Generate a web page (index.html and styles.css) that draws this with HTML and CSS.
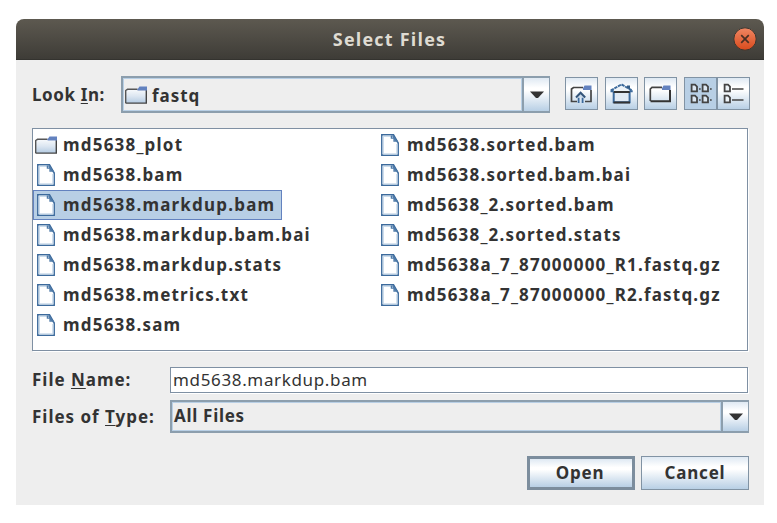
FILE: index.html
```html
<!DOCTYPE html>
<html lang="en">
<head>
<meta charset="utf-8">
<title>Select Files</title>
<link rel="stylesheet" href="styles.css">
</head>
<body>
<svg class="defs" width="0" height="0" aria-hidden="true">
  <defs>
    <linearGradient id="fold" x1="0" y1="0" x2="0" y2="1"><stop offset="0" stop-color="#f8fafc"/><stop offset=".5" stop-color="#dce6f1"/><stop offset="1" stop-color="#b4cbe2"/></linearGradient>
    <symbol id="folder" viewBox="0 0 22 18">
      <path d="M.7 17V4.5L2.5 3.3H12V5H21V17Z" fill="url(#fold)"/>
      <path d="M.7 17V4.5L2.5 3.3H12.5" fill="none" stroke="#555" stroke-width="1.4"/>
      <path d="M.5 17.1H21.3V4" fill="none" stroke="#444" stroke-width="1.4"/>
      <path d="M12.5 3.2L14.5.5H22V4.5H12.5Z" fill="#6382bf"/>
    </symbol>
    <symbol id="file" viewBox="0 0 18 22">
      <path d="M.8.8H12.5L17.2 9V21.2H.8Z" fill="#fff" stroke="#3c6a9c" stroke-width="1.5"/>
      <path d="M2.3 20V2.3H10M15.8 10V19.8H2.5" fill="none" stroke="#cbdcec" stroke-width="1.3"/>
      <path d="M10.4 1.5V4.2H13V7H16.5M11.5 1.5L16.8 8.7" fill="none" stroke="#4e7aa8" stroke-width="1.3"/>
    </symbol>
    <symbol id="down" viewBox="0 0 14 8"><path d="M0 .5H14L8 7H6Z" fill="#333"/></symbol>
  </defs>
</svg>
<main class="window">
  <header class="titlebar"><h1>Select Files</h1>
    <svg class="close" viewBox="0 0 24 24"><defs><linearGradient id="red" x1="0" y1="0" x2="0" y2="1"><stop stop-color="#f08763"/><stop offset="1" stop-color="#d94a1c"/></linearGradient></defs><circle cx="12" cy="12" r="11.2" fill="url(#red)" stroke="#383731" stroke-width="1"/><path d="M8.2 8.2L15.8 15.8M15.8 8.2L8.2 15.8" stroke="#4b3024" stroke-width="1.7"/></svg>
  </header>
  <section class="look">
    <label class="t-look">Look <span class="u">I</span>n:</label>
    <div class="combo"><div class="value"><svg class="folder"><use href="#folder"/></svg><span class="t-fastq">fastq</span></div><div class="arrow"><svg><use href="#down"/></svg></div></div>
    <div class="tools">
      <button class="tool"><svg viewBox="0 0 33 33"><path d="M12 24.5H6.5V12L8.5 10.5H18M26 13V24.5H20" fill="none" stroke="#444" stroke-width="1.7"/><path d="M18 11.2L19.5 8.5H26.5V13H18Z" fill="#6382bf"/><path d="M13.6 26V20.5M17.6 26V20.5" stroke="#3c6a9c" stroke-width="1.8"/><path d="M11 20.5L15.6 15.8L20.2 20.5" fill="#cbdcec" stroke="#34557a" stroke-width="2"/></svg></button>
      <button class="tool"><svg viewBox="0 0 33 33"><path d="M8.7 15V25.3H24.6V15" fill="#e1eaf4" stroke="#3c6a9c" stroke-width="2"/><path d="M8.5 15H25M8.5 25.5H25" stroke="#333" stroke-width="1.8"/><path d="M5.8 14L16.5 7.2L27.2 14Z" fill="#edf3f8"/><path d="M5.5 14.2H9M24.5 14.2H27.7M5.8 13.4L16.5 7.4L27 13.4" fill="none" stroke="#3c6a9c" stroke-width="1.9" stroke-dasharray="3.4 .7"/><path d="M22 8.5H25V12.8L22 11Z" fill="#345c86"/></svg></button>
      <button class="tool"><svg viewBox="0 0 33 33"><path d="M6.3 24V12L8 10.4H18" fill="none" stroke="#444" stroke-width="1.7"/><path d="M6.5 24.3H26V13" fill="none" stroke="#333" stroke-width="2"/><path d="M18 11.2L19.5 8.5H26.5V13H18Z" fill="#6382bf"/></svg></button>
      <div class="views">
        <button class="tool on"><svg viewBox="0 0 33 33"><path d="M7.6 7.7H11L13 9.6V14.4H7.6ZM18.6 7.7H22L24 9.6V14.4H18.6ZM7.6 18.7H11L13 20.6V25.4H7.6ZM18.6 18.7H22L24 20.6V25.4H18.6Z" fill="#dbe6f1" stroke="#444" stroke-width="1.8"/><path d="M15 12H16.7M26 12H27.7M15 23H16.7M26 23H27.7" stroke="#444" stroke-width="1.6"/></svg></button>
        <button class="tool last"><svg viewBox="0 0 33 33"><path d="M7.6 7.7H11L13 9.6V14.4H7.6ZM7.6 18.7H11L13 20.6V25.4H7.6Z" fill="#edf3f8" stroke="#444" stroke-width="1.8"/><path d="M15 12H26.5M15 23H26.5" stroke="#444" stroke-width="1.6"/></svg></button>
      </div>
    </div>
  </section>
  <section class="list">
    <ul>
      <li><svg class="folder"><use href="#folder"/></svg><span>md5638_plot</span></li>
      <li><svg class="file"><use href="#file"/></svg><span>md5638.bam</span></li>
      <li class="selected"><svg class="file"><use href="#file"/></svg><span>md5638.markdup.bam</span></li>
      <li><svg class="file"><use href="#file"/></svg><span>md5638.markdup.bam.bai</span></li>
      <li><svg class="file"><use href="#file"/></svg><span>md5638.markdup.stats</span></li>
      <li><svg class="file"><use href="#file"/></svg><span>md5638.metrics.txt</span></li>
      <li><svg class="file"><use href="#file"/></svg><span>md5638.sam</span></li>
    </ul>
    <ul>
      <li><svg class="file"><use href="#file"/></svg><span>md5638.sorted.bam</span></li>
      <li><svg class="file"><use href="#file"/></svg><span>md5638.sorted.bam.bai</span></li>
      <li><svg class="file"><use href="#file"/></svg><span>md5638_2.sorted.bam</span></li>
      <li><svg class="file"><use href="#file"/></svg><span>md5638_2.sorted.stats</span></li>
      <li><svg class="file"><use href="#file"/></svg><span>md5638a_7_87000000_R1.fastq.gz</span></li>
      <li><svg class="file"><use href="#file"/></svg><span>md5638a_7_87000000_R2.fastq.gz</span></li>
    </ul>
  </section>
  <section class="form">
    <label class="t-name">File <span class="u">N</span>ame:</label>
    <div class="field">md5638.markdup.bam</div>
    <label class="t-type">Files of <span class="u">T</span>ype:</label>
    <div class="combo small"><div class="value"><span class="t-all">All Files</span></div><div class="arrow"><svg><use href="#down"/></svg></div></div>
  </section>
  <footer><button class="action default">Open</button><button class="action">Cancel</button></footer>
</main>
</body>
</html>
```

FILE: styles.css
```css
* { box-sizing: border-box; }
body { margin: 0; padding: 19px 13px 18px 16px; background: #fff; color: #333; font: bold 17px/20px "Noto Sans", sans-serif; letter-spacing: .98px; }
svg { display: block; flex: none; }
.defs { position: absolute; }
.window { width: 748px; height: 486px; background: #eee; border-radius: 8px 8px 0 0; overflow: hidden; }
.titlebar { height: 41px; display: flex; align-items: center; justify-content: flex-end; padding-right: 7px; background: linear-gradient(#5d5950, #3e3c37); border-bottom: 1px solid #34332f; }
h1 { flex: 1; margin: 0; padding-left: 30px; text-align: center; color: #dfdbd2; font: bold 18px/24px "Open Sans", sans-serif; letter-spacing: 1.2px; }
.close { width: 24px; height: 24px; }
.look { height: 38px; margin: 16px 15px 0 16px; display: flex; }
.look label { width: 89px; padding-top: 9px; flex: none; }
.t-look { letter-spacing: .6px; }
label, span { white-space: nowrap; }
.u { text-decoration: underline; text-decoration-thickness: 1px; text-underline-offset: 2px; text-decoration-skip-ink: none; }
.combo { flex: none; width: 429px; height: 37px; display: flex; border: 2px solid #8c9ead; border-right-width: 1px; }
.value { flex: 1; display: flex; gap: 5px; padding: 7px 0 0 1px; border: 1px solid #b8cfe5; }
.folder { width: 22px; height: 18px; }
.file { width: 18px; height: 22px; }
.arrow { width: 27px; display: flex; align-items: center; justify-content: center; border-left: 2px solid #8c9ead; background: linear-gradient(#dfe9f3, #fff 30%, #fff 38%, #b8cfe5); }
.arrow svg { width: 14px; height: 8px; }
.tools { display: flex; gap: 6.5px; padding-top: 1px; margin-left: 15px; }
.views { display: flex; }
.tool { width: 33px; height: 33px; padding: 0; border: 1px solid #8193a4; background: linear-gradient(#dfe9f3, #fff 30%, #fff 38%, #b8cfe5); }
.tool svg { width: 33px; height: 33px; margin: -1px; }
.tool.on { background: #b8cfe5; }
.list { width: 716px; height: 223px; margin: 14px 0 0 16px; display: flex; background: #fff; border: 1px solid #7f90a3; box-shadow: 1px 1px #fff; padding: 1px 0 0; letter-spacing: 1.2px; }
ul { width: 344px; margin: 0; padding: 0; list-style: none; }
li { width: max-content; height: 30px; display: flex; align-items: center; gap: 8px; padding: 0 6px 0 4px; }
li .folder { margin: 0 -2px 0 -2px; }
.selected { width: 249px; height: 30px; background: #b8cfe5; outline: 1px solid #6382bf; outline-offset: -1px; }
.form { margin: 16px 15px 0 16px; display: grid; grid-template-columns: 138px 579px; row-gap: 7px; }
.form label { padding-top: 3px; }
.form .t-type { padding-top: 7px; }
.field { width: 578px; height: 26px; background: #fff; border: 1px solid #7f90a3; box-shadow: 1px 1px #fff; padding: 2px; font-weight: 400; letter-spacing: .65px; }
.small { width: 579px; height: 33px; }
.small .value { padding: 3px 0 0 1px; letter-spacing: .7px; }
footer { display: flex; justify-content: flex-end; gap: 6px; margin: 23px 15px 0; }
.action { width: 108px; height: 34px; padding: 0; color: #333; font: inherit; letter-spacing: .8px; border: 1px solid #8193a4; background: linear-gradient(#dfe9f3, #fff 30%, #fff 38%, #b8cfe5); }
.default { border: 3px solid #7c8d9d; padding-right: 2px; }
```
